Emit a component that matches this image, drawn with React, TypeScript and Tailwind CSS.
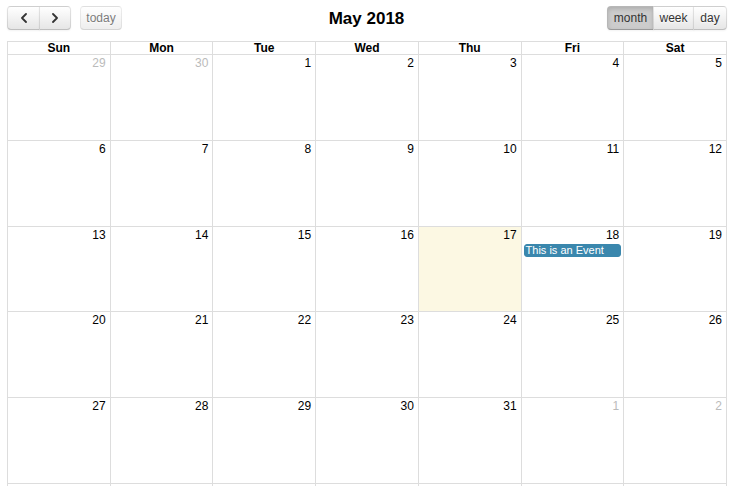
import React from 'react';

type Day = { n: number; other?: boolean; today?: boolean; event?: string };

const dayNames = ['Sun', 'Mon', 'Tue', 'Wed', 'Thu', 'Fri', 'Sat'];

const buildWeeks = (): Day[][] => {
  const days: Day[] = [{ n: 29, other: true }, { n: 30, other: true }];
  for (let i = 1; i <= 31; i++) {
    days.push({ n: i, today: i === 17, event: i === 18 ? 'This is an Event' : undefined });
  }
  for (let i = 1; i <= 9; i++) days.push({ n: i, other: true });
  const weeks: Day[][] = [];
  for (let w = 0; w < 6; w++) weeks.push(days.slice(w * 7, w * 7 + 7));
  return weeks;
};

const btn =
  'h-[24px] px-[7px] text-[12px] text-[#333] border border-[rgba(0,0,0,0.1)] border-b-[rgba(0,0,0,0.25)] bg-gradient-to-b from-white to-[#e6e6e6] shadow-[inset_0_1px_0_rgba(255,255,255,0.2),0_1px_2px_rgba(0,0,0,0.05)] [text-shadow:0_1px_1px_rgba(255,255,255,0.75)] flex items-center justify-center';

const Chevron: React.FC<{ dir: 'left' | 'right' }> = ({ dir }) => (
  <svg width="8" height="10" viewBox="0 0 8 10" fill="none">
    <path
      d={dir === 'left' ? 'M6 1 L2 5 L6 9' : 'M2 1 L6 5 L2 9'}
      stroke="#333"
      strokeWidth="1.8"
      strokeLinecap="round"
      strokeLinejoin="round"
    />
  </svg>
);

const App: React.FC = () => {
  const weeks = buildWeeks();

  return (
    <div className="px-[7px] pt-[6px] font-['Liberation_Sans',Arial,sans-serif] text-[12px] text-black bg-white">
      {/* toolbar */}
      <div className="flex items-center justify-between h-[24px] mb-[11px]">
        <div className="flex items-center">
          <div className="flex">
            <button className={`${btn} w-[33px] rounded-l-[4px]`}>
              <Chevron dir="left" />
            </button>
            <button className={`${btn} w-[32px] -ml-px rounded-r-[4px]`}>
              <Chevron dir="right" />
            </button>
          </div>
          <button className={`${btn} ml-[9px] w-[42px] rounded-[4px] opacity-65 shadow-none`}>today</button>
        </div>
        <h2 className="text-[17px] font-bold leading-none ml-[4px]">May 2018</h2>
        <div className="flex">
          <button className="h-[24px] px-[7px] text-[12px] text-[#333] w-[47px] rounded-l-[4px] border border-[rgba(0,0,0,0.1)] border-b-[rgba(0,0,0,0.25)] bg-[#ccc] shadow-[inset_0_2px_4px_rgba(0,0,0,0.15),0_1px_2px_rgba(0,0,0,0.05)] flex items-center justify-center">
            month
          </button>
          <button className={`${btn} w-[41px] -ml-px`}>week</button>
          <button className={`${btn} w-[34px] -ml-px rounded-r-[4px]`}>day</button>
        </div>
      </div>

      {/* grid */}
      <div className="w-[720px]">
        <div className="grid grid-cols-7 border-t border-l border-[#ddd]">
          {dayNames.map((d) => (
            <div key={d} className="h-[13px] border-r border-b border-[#ddd] text-center font-bold text-[12px] leading-[12px]">
              {d}
            </div>
          ))}
        </div>
        <div className="grid grid-cols-7 border-l border-[#ddd]">
          {weeks.flat().map((day, i) => (
            <div
              key={i}
              className={`h-[85.8px] border-r border-b border-[#ddd] ${day.today ? 'bg-[#fcf8e3]' : ''}`}
            >
              <div className={`text-right pr-[4px] pt-[1px] leading-[14px] ${day.other ? 'text-[#bbb]' : ''}`}>{day.n}</div>
              {day.event && (
                <div className="mx-[2px] mt-[2px] h-[13px] rounded-[3px] bg-[#3a87ad] border border-[#3a87ad] text-white text-[11px] leading-[11px] pl-[1px]">
                  {day.event}
                </div>
              )}
            </div>
          ))}
        </div>
      </div>
    </div>
  );
};

export default App;
